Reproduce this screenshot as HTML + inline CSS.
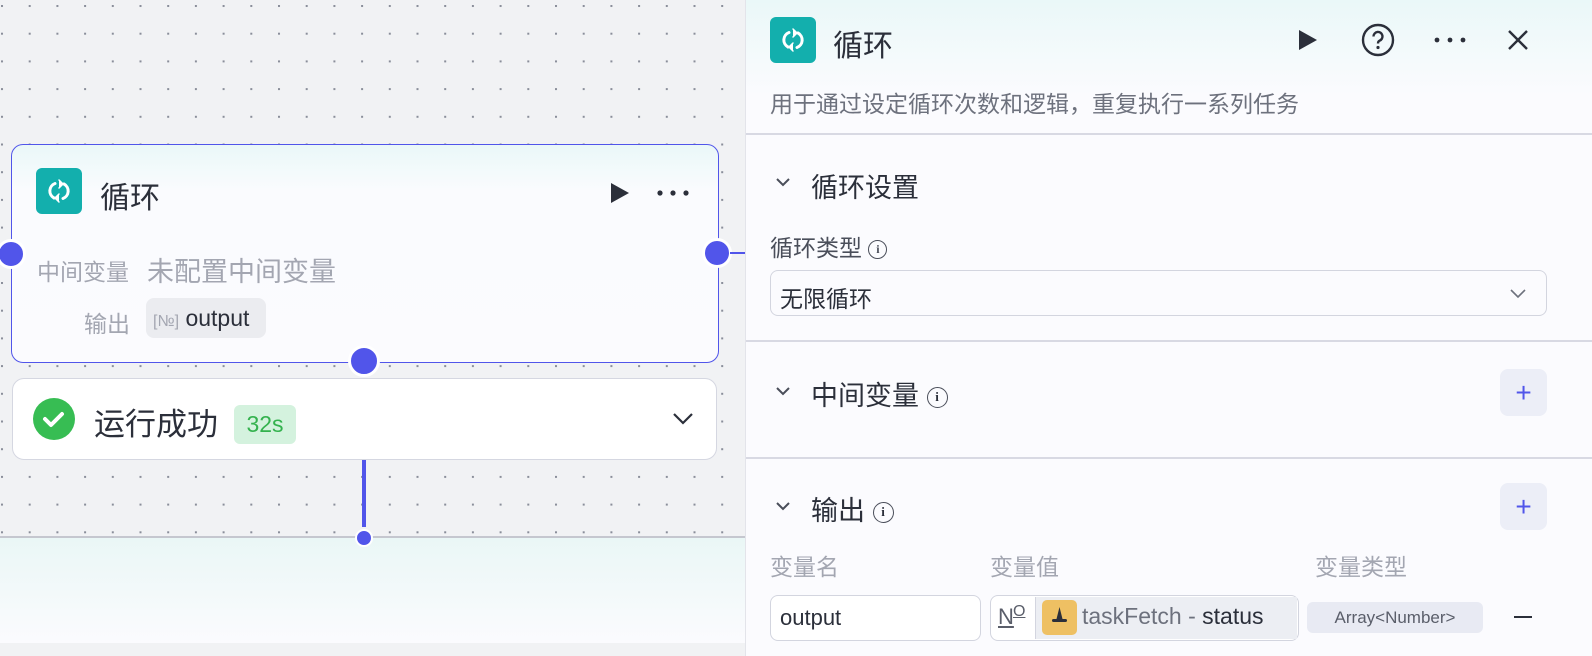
<!DOCTYPE html>
<html><head><meta charset="utf-8"><style>
*{box-sizing:border-box;margin:0;padding:0}
body{width:1592px;height:656px;overflow:hidden;background:#f1f2f4;font-family:"Liberation Sans","Noto Sans CJK SC",sans-serif;position:relative;color:#2b2f3a}
.abs{position:absolute;white-space:nowrap}
.canvas{left:0;top:0;width:745px;height:537px;background:#f1f2f4}
.hline{left:0;top:536px;width:745px;height:2px;background:#c5c7cf}
.bot{left:0;top:538px;width:745px;height:105px;background:linear-gradient(#eaf7f6,#fbfbfe)}
.card{left:11px;top:144px;width:708px;height:219px;border:1.5px solid #5155ea;border-radius:12px;background:linear-gradient(#eaf8f8 0,#fafbfe 45px,#fbfbfe 100%)}
.ico{background:#13afad;border-radius:6px;display:flex;align-items:center;justify-content:center}
.handle{border-radius:50%;background:#5155ea;border:3px solid #fff}
.status{left:12px;top:378px;width:705px;height:82px;background:#fff;border:1.5px solid #d5d7e1;border-radius:12px}
.panel{left:745px;top:0;width:847px;height:656px;background:#fbfbfe;border-left:1px solid #e3e4ea}
.div{left:0;width:847px;height:2px;background:#d8d9e3}
.sel{border:1.5px solid #d3d5df;border-radius:8px;background:#fbfbfe}
.plus{width:47px;height:47px;border-radius:8px;background:#eceef7;color:#5155ea;font-size:28px;display:flex;align-items:center;justify-content:center;font-weight:300}
.info{display:inline-block;width:21px;height:21px;border:1.6px solid #4a4e5a;border-radius:50%;font-size:13px;line-height:18px;text-align:center;font-family:"Liberation Serif",serif;font-weight:bold;vertical-align:middle}
</style></head><body>
<div class="abs canvas"></div>
<svg class="abs" style="left:0;top:0" width="745" height="537"><defs><pattern id="d" width="27.7" height="27.7" patternUnits="userSpaceOnUse" x="1" y="5"><rect x="0" y="0" width="2" height="2" fill="#8a8e9a"/></pattern></defs><rect width="745" height="537" fill="url(#d)"/></svg>
<div class="abs hline"></div>
<div class="abs bot"></div>

<div class="abs card"></div>
<div class="abs ico" style="left:36px;top:168px;width:46px;height:46px">
<svg width="30" height="30" viewBox="0 0 30 30" fill="none" stroke="#fff" stroke-width="3" stroke-linecap="round"><path d="M11 7.5A8 8 0 0 0 10 22"/><path d="M19 22.5A8 8 0 0 0 20 8"/><path d="M15 4l4 4-4 4" fill="#fff" stroke-width="1.5"/><path d="M15 26l-4-4 4-4" fill="#fff" stroke-width="1.5"/></svg></div>
<div class="abs" style="left:100px;top:173px;font-size:30px;color:#2b2f3a">循环</div>
<svg class="abs" style="left:609px;top:181px" width="22" height="24" viewBox="0 0 22 24"><path d="M2 2L20 12L2 22Z" fill="#2b2f3a"/></svg>
<svg class="abs" style="left:656px;top:189px" width="34" height="8"><circle cx="4" cy="4" r="2.6" fill="#2b2f3a"/><circle cx="17" cy="4" r="2.6" fill="#2b2f3a"/><circle cx="30" cy="4" r="2.6" fill="#2b2f3a"/></svg>
<div class="abs" style="left:37px;top:253px;font-size:23px;color:#a3a6b1">中间变量</div>
<div class="abs" style="left:147px;top:250px;font-size:27px;color:#a3a6b1">未配置中间变量</div>
<div class="abs" style="left:84px;top:305px;font-size:23px;color:#a3a6b1">输出</div>
<div class="abs" style="left:146px;top:298px;width:120px;height:40px;background:#ebecf0;border-radius:8px;font-size:23px;line-height:40px;padding-left:7px;color:#2b2f3a"><span style="color:#a3a6b1;font-size:16px">[№]</span> output</div>
<div class="abs handle" style="left:-4px;top:239px;width:30px;height:30px"></div>
<div class="abs handle" style="left:702px;top:238px;width:30px;height:30px"></div>
<div class="abs" style="left:730px;top:252px;width:15px;height:2px;background:#5155ea"></div>
<div class="abs handle" style="left:348px;top:345px;width:32px;height:32px"></div>

<div class="abs status"></div>
<svg class="abs" style="left:32px;top:397px" width="44" height="44" viewBox="0 0 44 44"><circle cx="22" cy="22" r="21" fill="#37bd53"/><path d="M13 22l6 6 11-11" fill="none" stroke="#fff" stroke-width="4" stroke-linecap="round" stroke-linejoin="round"/></svg>
<div class="abs" style="left:94px;top:399px;font-size:31px;color:#2b2f3a">运行成功</div>
<div class="abs" style="left:234px;top:405px;width:62px;height:39px;background:#d4f2de;border-radius:6px;color:#34b24e;font-size:23px;line-height:39px;text-align:center">32s</div>
<svg class="abs" style="left:672px;top:411px" width="22" height="14" viewBox="0 0 22 14"><path d="M2 3l9 9 9-9" fill="none" stroke="#2b2f3a" stroke-width="2.2"/></svg>
<div class="abs" style="left:362px;top:460px;width:4px;height:67px;background:#5155ea"></div>
<div class="abs handle" style="left:355px;top:529px;width:18px;height:18px;border-width:2px"></div>

<div class="abs panel">
 <div class="abs" style="left:0;top:0;width:847px;height:95px;background:linear-gradient(#eaf8f8,#fbfbfe)"></div>
 <div class="abs ico" style="left:24px;top:17px;width:46px;height:46px">
 <svg width="30" height="30" viewBox="0 0 30 30" fill="none" stroke="#fff" stroke-width="3" stroke-linecap="round"><path d="M11 7.5A8 8 0 0 0 10 22"/><path d="M19 22.5A8 8 0 0 0 20 8"/><path d="M15 4l4 4-4 4" fill="#fff" stroke-width="1.5"/><path d="M15 26l-4-4 4-4" fill="#fff" stroke-width="1.5"/></svg></div>
 <div class="abs" style="left:87px;top:21px;font-size:30px">循环</div>
 <svg class="abs" style="left:551px;top:28px" width="22" height="24" viewBox="0 0 22 24"><path d="M2 2L20 12L2 22Z" fill="#2b2f3a"/></svg>
 <svg class="abs" style="left:615px;top:23px" width="34" height="34" viewBox="0 0 34 34"><circle cx="17" cy="17" r="15" fill="none" stroke="#2b2f3a" stroke-width="2.4"/><path d="M12.5 13.5a4.5 4.5 0 1 1 6 4.2c-1.2.5-1.5 1.3-1.5 2.8" fill="none" stroke="#2b2f3a" stroke-width="2.4"/><circle cx="17" cy="24.5" r="1.6" fill="#2b2f3a"/></svg>
 <svg class="abs" style="left:687px;top:36px" width="34" height="8"><circle cx="4" cy="4" r="2.4" fill="#2b2f3a"/><circle cx="17" cy="4" r="2.4" fill="#2b2f3a"/><circle cx="30" cy="4" r="2.4" fill="#2b2f3a"/></svg>
 <svg class="abs" style="left:761px;top:29px" width="22" height="22" viewBox="0 0 22 22"><path d="M2 2l18 18M20 2L2 20" stroke="#2b2f3a" stroke-width="2.4"/></svg>
 <div class="abs" style="left:24px;top:85px;font-size:23px;color:#6d717d">用于通过设定循环次数和逻辑，重复执行一系列任务</div>
 <div class="abs div" style="top:133px"></div>
 <svg class="abs" style="left:29px;top:176px" width="16" height="12" viewBox="0 0 16 12"><path d="M2 3l6 6 6-6" fill="none" stroke="#4a4e5a" stroke-width="2"/></svg>
 <div class="abs" style="left:65px;top:166px;font-size:27px">循环设置</div>
 <div class="abs" style="left:24px;top:229px;font-size:23px;color:#4a4e5a">循环类型 <span class="info" style="width:19px;height:19px;font-size:12px;line-height:16px">i</span></div>
 <div class="abs sel" style="left:24px;top:270px;width:777px;height:46px"></div>
 <div class="abs" style="left:34px;top:280px;font-size:23px">无限循环</div>
 <svg class="abs" style="left:763px;top:287px" width="18" height="12" viewBox="0 0 18 12"><path d="M2 3l7 7 7-7" fill="none" stroke="#6d717d" stroke-width="1.6"/></svg>
 <div class="abs div" style="top:340px"></div>
 <svg class="abs" style="left:29px;top:385px" width="16" height="12" viewBox="0 0 16 12"><path d="M2 3l6 6 6-6" fill="none" stroke="#4a4e5a" stroke-width="2"/></svg>
 <div class="abs" style="left:65px;top:374px;font-size:27px">中间变量 <span class="info">i</span></div>
 <div class="abs plus" style="left:754px;top:369px">+</div>
 <div class="abs div" style="top:457px"></div>
 <svg class="abs" style="left:29px;top:500px" width="16" height="12" viewBox="0 0 16 12"><path d="M2 3l6 6 6-6" fill="none" stroke="#4a4e5a" stroke-width="2"/></svg>
 <div class="abs" style="left:65px;top:489px;font-size:27px">输出 <span class="info">i</span></div>
 <div class="abs plus" style="left:754px;top:483px">+</div>
 <div class="abs" style="left:24px;top:548px;font-size:23px;color:#a3a6b1">变量名</div>
 <div class="abs" style="left:244px;top:548px;font-size:23px;color:#a3a6b1">变量值</div>
 <div class="abs" style="left:569px;top:548px;font-size:23px;color:#a3a6b1">变量类型</div>
 <div class="abs sel" style="left:24px;top:595px;width:211px;height:46px;background:#fff"></div>
 <div class="abs" style="left:34px;top:605px;font-size:22px">output</div>
 <div class="abs sel" style="left:244px;top:595px;width:309px;height:46px;background:#fff"></div>
 <div class="abs" style="left:252px;top:604px;font-size:22px;color:#5a5e6a;text-decoration:underline">N</div><div class="abs" style="left:267px;top:603px;font-size:16px;color:#5a5e6a;text-decoration:underline">O</div>
 <div class="abs" style="left:289px;top:597px;width:262px;height:42px;background:#eceef3;border-left:1.5px solid #d3d5df"></div>
 <div class="abs" style="left:296px;top:600px;width:35px;height:35px;background:#eec063;border-radius:5px"><svg width="35" height="35" viewBox="0 0 35 35"><path d="M17.5 7l3 12h-6z" fill="#2b2f3a"/><rect x="10" y="19" width="15" height="3" rx="1.5" fill="#2b2f3a"/></svg></div>
 <div class="abs" style="left:336px;top:603px;font-size:23px;color:#6d717d">taskFetch - <span style="color:#2b2f3a">status</span></div>
 <div class="abs" style="left:561px;top:602px;width:176px;height:31px;background:#e8eaf3;border-radius:6px;color:#5a5e6a;font-size:17px;line-height:31px;text-align:center">Array&lt;Number&gt;</div>
 <div class="abs" style="left:768px;top:616px;width:18px;height:2px;background:#2b2f3a"></div>
</div>
</body></html>
